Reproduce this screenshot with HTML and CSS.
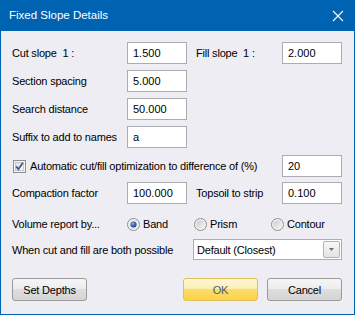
FILE: index.html
```html
<!DOCTYPE html>
<html lang="en">
<head>
    <meta charset="UTF-8">
    <meta name="viewport" content="width=device-width, initial-scale=1.0">
    <title>Fixed Slope Details</title>
    <link rel="stylesheet" href="styles.css">
</head>
<body>

    <div class="window">
        <div class="titlebar">
            <span class="title">Fixed Slope Details</span>
            <svg class="close" width="12" height="12" viewBox="0 0 12 12">
                <path d="M1 1 L11 11 M11 1 L1 11" stroke="#fff" stroke-width="1.1" fill="none"/>
            </svg>
        </div>

        <div class="content">
            <div class="row">
                <span class="lbl lbl-main">Cut slope&nbsp; 1 :</span>
                <input class="field" type="text" value="1.500" readonly>
                <span class="lbl lbl-side">Fill slope&nbsp; 1 :</span>
                <input class="field" type="text" value="2.000" readonly>
            </div>

            <div class="row">
                <span class="lbl lbl-main">Section spacing</span>
                <input class="field" type="text" value="5.000" readonly>
            </div>

            <div class="row">
                <span class="lbl lbl-main">Search distance</span>
                <input class="field" type="text" value="50.000" readonly>
            </div>

            <div class="row">
                <span class="lbl lbl-main">Suffix to add to names</span>
                <input class="field" type="text" value="a" readonly>
            </div>

            <div class="row row-check">
                <svg class="checkbox" width="13" height="13" viewBox="0 0 13 13">
                    <defs>
                        <linearGradient id="cbg" x1="0" y1="0" x2="1" y2="1">
                            <stop offset="0" stop-color="#dcdfe4"/>
                            <stop offset="1" stop-color="#fbfbfb"/>
                        </linearGradient>
                    </defs>
                    <rect x="0.5" y="0.5" width="12" height="12" fill="#f4f4f4" stroke="#8e8f8f"/>
                    <rect x="2.5" y="2.5" width="8" height="8" fill="url(#cbg)" stroke="#c4c7cc"/>
                    <path d="M3.2 6.4 L5.4 9.2 L9.8 2.8" stroke="#41587f" stroke-width="1.7" fill="none"/>
                </svg>
                <span class="lbl lbl-check">Automatic cut/fill optimization to difference of (%)</span>
                <input class="field push" type="text" value="20" readonly>
            </div>

            <div class="row row-compact">
                <span class="lbl lbl-main">Compaction factor</span>
                <input class="field" type="text" value="100.000" readonly>
                <span class="lbl lbl-side">Topsoil to strip</span>
                <input class="field" type="text" value="0.100" readonly>
            </div>

            <div class="row row-radio">
                <span class="lbl lbl-main">Volume report by...</span>
                <span class="radio-item radio-band">
                    <svg width="13" height="13" viewBox="0 0 13 13">
                        <defs>
                            <radialGradient id="dot" cx="0.4" cy="0.35" r="0.7">
                                <stop offset="0" stop-color="#8fb4ea"/>
                                <stop offset="0.5" stop-color="#3d6bb3"/>
                                <stop offset="1" stop-color="#1c3c78"/>
                            </radialGradient>
                        </defs>
                        <circle cx="6.5" cy="6.5" r="6" fill="#f2f2f2" stroke="#8e8f8f"/>
                        <circle cx="6.5" cy="6.5" r="4.3" fill="#e2e3e6"/>
                        <circle cx="6.5" cy="6.5" r="3" fill="url(#dot)"/>
                    </svg>
                    Band
                </span>
                <span class="radio-item radio-prism">
                    <svg width="13" height="13" viewBox="0 0 13 13">
                        <defs>
                            <linearGradient id="rin" x1="0" y1="0" x2="1" y2="1">
                                <stop offset="0" stop-color="#c9cbcf"/>
                                <stop offset="1" stop-color="#f6f6f6"/>
                            </linearGradient>
                        </defs>
                        <circle cx="6.5" cy="6.5" r="6" fill="#f2f2f2" stroke="#8e8f8f"/>
                        <circle cx="6.5" cy="6.5" r="4.3" fill="url(#rin)"/>
                    </svg>
                    Prism
                </span>
                <span class="radio-item">
                    <svg width="13" height="13" viewBox="0 0 13 13">
                        <circle cx="6.5" cy="6.5" r="6" fill="#f2f2f2" stroke="#8e8f8f"/>
                        <circle cx="6.5" cy="6.5" r="4.3" fill="url(#rin)"/>
                    </svg>
                    Contour
                </span>
            </div>

            <div class="row row-select">
                <span class="lbl">When cut and fill are both possible</span>
                <div class="select push">
                    <span>Default (Closest)</span>
                    <span class="select-btn">
                        <svg width="5" height="3" viewBox="0 0 5 3">
                            <path d="M0 0 H5 L2.5 3 Z" fill="#6d6d6d"/>
                        </svg>
                    </span>
                </div>
            </div>

            <div class="row row-buttons">
                <button class="btn">Set Depths</button>
                <button class="btn btn-ok push">OK</button>
                <button class="btn btn-cancel">Cancel</button>
            </div>
        </div>
    </div>

</body>
</html>
```

FILE: styles.css
```css
body {
    margin: 0;
    font-family: "Liberation Sans", Arial, sans-serif;
    font-size: 11px;
    letter-spacing: -0.2px;
    color: #000;
}

.window {
    width: 355px;
    height: 315px;
    box-sizing: border-box;
    border: 1px solid #0063b1;
    border-top: none;
    background-color: #eeedf3;
}

.titlebar {
    height: 31px;
    background-color: #0063b1;
    color: #fff;
    display: flex;
    align-items: center;
    justify-content: space-between;
    padding: 0 10px 0 8px;
}

.title {
    font-size: 11.5px;
    letter-spacing: 0;
    padding-bottom: 1px;
}

.content {
    padding: 11px 12px 0 11px;
}

.row {
    display: flex;
    align-items: center;
    height: 22px;
    margin-bottom: 6px;
}

.lbl {
    white-space: nowrap;
}

.lbl-main {
    width: 115px;
    flex-shrink: 0;
}

.lbl-side {
    width: 86px;
    margin-left: 9px;
    flex-shrink: 0;
}

.field {
    width: 60px;
    height: 22px;
    box-sizing: border-box;
    padding: 0 5px;
    border: 1px solid #abadb3;
    background-color: #fff;
    font-family: "Liberation Sans", Arial, sans-serif;
    font-size: 11px;
    color: #000;
    outline: none;
    margin: 0;
}

.push {
    margin-left: auto;
}

.row-check {
    margin-top: 7px;
    margin-bottom: 5px;
}

.checkbox {
    margin-left: 1px;
    margin-right: 4px;
    flex-shrink: 0;
}

.row-radio {
    margin-top: 9px;
    margin-bottom: 4px;
}

.radio-item {
    display: flex;
    align-items: center;
    gap: 3px;
}

.radio-band {
    width: 67px;
}

.radio-prism {
    width: 77px;
}

.row-select {
    height: 21px;
}

.select {
    width: 149px;
    height: 21px;
    box-sizing: border-box;
    border: 1px solid #abadb3;
    background-color: #fff;
    display: flex;
    align-items: center;
    justify-content: space-between;
    padding: 0 1px 0 3px;
}

.select-btn {
    width: 17px;
    height: 17px;
    box-sizing: border-box;
    border: 1px solid #b4b4b4;
    border-radius: 2px;
    background: linear-gradient(#f7f7f7, #e3e3e3);
    display: flex;
    align-items: center;
    justify-content: center;
}

.row-buttons {
    margin-top: 18px;
    height: 23px;
}

.btn {
    width: 75px;
    height: 23px;
    border: 1px solid #9a9a9a;
    border-radius: 3px;
    background: linear-gradient(#f6f6f6 0%, #ededed 45%, #dedede 50%, #d4d4d4 100%);
    font-family: "Liberation Sans", Arial, sans-serif;
    font-size: 11px;
    letter-spacing: -0.2px;
    color: #000;
    padding: 0;
    cursor: pointer;
}

.btn-ok {
    border-color: #e2bf5a;
    background: linear-gradient(#fef8da 0%, #fdefb4 45%, #fcdc6a 50%, #fbd34a 100%);
    color: #4a5b72;
}

.btn-cancel {
    margin-left: 9px;
}
```
